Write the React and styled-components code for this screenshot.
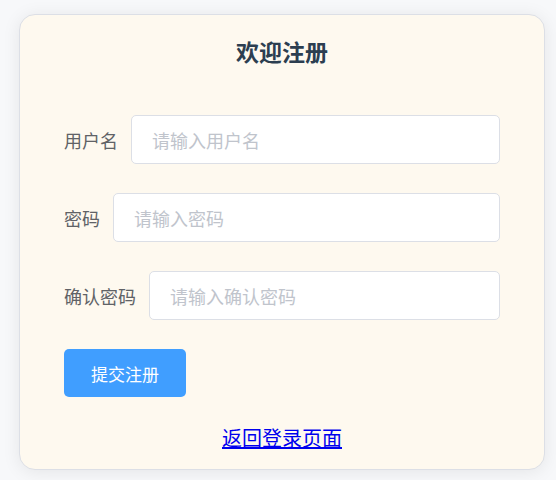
import React from 'react';
import styled, { createGlobalStyle } from 'styled-components';

const GlobalStyle = createGlobalStyle`
  html, body {
    margin: 0;
    background: #f7f8fa;
    font-family: "Noto Sans CJK SC", "Noto Sans", sans-serif;
  }
`;

const Page = styled.div`
  padding: 14px 11px 10px 19px;
`;

const Card = styled.div`
  box-sizing: border-box;
  height: 456px;
  padding: 21px 44px 0;
  background: #fef9ef;
  border: 1px solid #dcdfe6;
  border-radius: 16px;
  box-shadow: 0 2px 18px rgba(0, 0, 0, 0.08);
`;

const Title = styled.h2`
  margin: 0 0 49px;
  text-align: center;
  font-size: 23px;
  font-weight: 700;
  line-height: 30px;
  color: #2c3e50;
`;

const Form = styled.form`
  display: flex;
  flex-direction: column;
  gap: 29px;
`;

const Row = styled.div`
  display: flex;
  align-items: center;
  gap: 13px;
`;

const Label = styled.label`
  font-size: 18px;
  color: #606266;
  white-space: nowrap;
`;

const Input = styled.input`
  flex: 1;
  box-sizing: border-box;
  height: 49px;
  padding: 0 20px;
  border: 1px solid #dcdfe6;
  border-radius: 5px;
  background: #fff;
  font-family: inherit;
  font-size: 18px;
  color: #606266;
  outline: none;
  &::placeholder {
    color: #c0c4cc;
  }
`;

const Submit = styled.button`
  align-self: flex-start;
  width: 122px;
  height: 48px;
  border: none;
  border-radius: 5px;
  background: #409eff;
  color: #fff;
  font-family: inherit;
  font-size: 17px;
  cursor: pointer;
`;

const Footer = styled.div`
  margin-top: 26px;
  text-align: center;
`;

const BackLink = styled.a`
  font-size: 20px;
  color: #0000ee;
`;

export default function App() {
  return (
    <Page>
      <GlobalStyle />
      <Card>
        <Title>欢迎注册</Title>
        <Form onSubmit={(e) => e.preventDefault()}>
          <Row>
            <Label>用户名</Label>
            <Input placeholder="请输入用户名" />
          </Row>
          <Row>
            <Label>密码</Label>
            <Input type="password" placeholder="请输入密码" />
          </Row>
          <Row>
            <Label>确认密码</Label>
            <Input type="password" placeholder="请输入确认密码" />
          </Row>
          <Submit type="submit">提交注册</Submit>
        </Form>
        <Footer>
          <BackLink href="#">返回登录页面</BackLink>
        </Footer>
      </Card>
    </Page>
  );
}
